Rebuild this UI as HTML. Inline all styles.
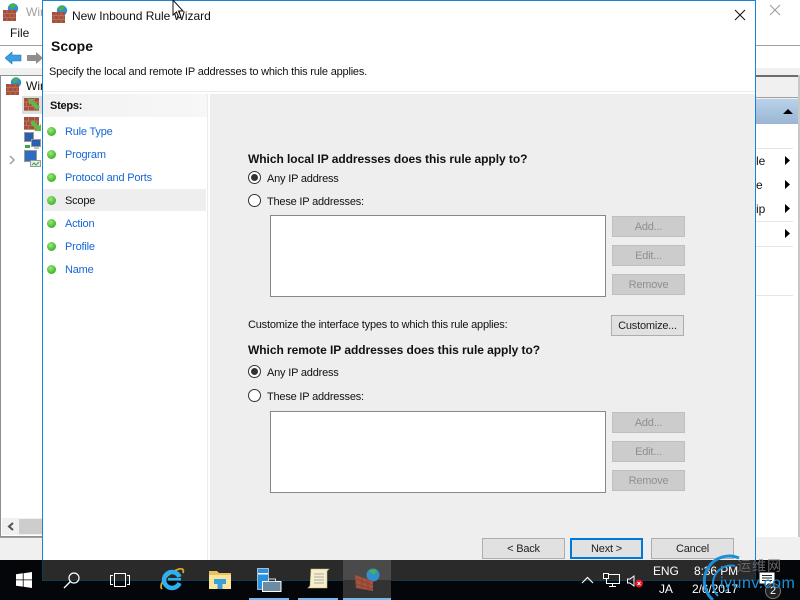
<!DOCTYPE html>
<html><head><meta charset="utf-8">
<style>
html,body{margin:0;padding:0;width:800px;height:600px;overflow:hidden;background:#f0f0f0}
body{position:relative;font-family:"Liberation Sans",sans-serif;font-size:11px;color:#111}
.a{position:absolute;white-space:nowrap;line-height:14px;font-size:11px;letter-spacing:-.2px}
.h{font-weight:bold;font-size:12px;letter-spacing:-.05px}
.b{position:absolute;box-sizing:border-box}
.btn{position:absolute;box-sizing:border-box;background:#e1e1e1;border:1px solid #adadad;text-align:center;line-height:21px;font-size:11px;letter-spacing:-.2px;color:#222}
.dis{background:#ccc;border-color:#bfbfbf;color:#8f8f8f}
.link{color:#1566d6;left:65px}
.dot{position:absolute;left:47px;width:9px;height:9px;border-radius:50%;background:radial-gradient(circle at 40% 35%,#9be87c,#3eb52b 70%)}
.radio{position:absolute;left:248px;box-sizing:border-box;width:13px;height:13px;border-radius:50%;border:1px solid #333;background:#fff}
.radio i{position:absolute;left:2px;top:2px;width:7px;height:7px;border-radius:50%;background:#333}
.list{position:absolute;left:270px;width:336px;box-sizing:border-box;background:#fff;border:1px solid #828790}
.tab{position:absolute;top:598px;height:2px;background:#76b9ed}
</style></head><body>
<svg width="0" height="0" style="position:absolute"><defs>
<g id="wall"><rect x="0" y="0" width="13" height="11" fill="#a5503c"/><path d="M0 3.500h13M0 7.500h13M4 0v3.500M9 0v3.500M2 3.500v4M7 3.500v4M11 3.500v4M4 7.500v3.500M9 7.500v3.500" stroke="#c58a78" stroke-width=".5" fill="none"/></g>
<g id="fw"><circle cx="10" cy="5.500" r="5.200" fill="#2f8fd0"/><path d="M6.500 2a5 4 0 0 1 7 0l-3 3-2.500 1z" fill="#49b14a"/><use href="#wall" x="0" y="7"/></g>
</defs></svg>

<!-- Background window -->
<div class="b" style="left:0;top:0;width:800px;height:46px;background:#fff;border-bottom:1px solid #a0a0a0"></div>
<svg class="b" style="left:3px;top:3px" width="16" height="19"><use href="#fw"/></svg>
<div class="a" style="left:26px;top:5px;color:#a0a0a0;font-size:12px;letter-spacing:0">Win</div>
<div class="a" style="left:10px;top:26px;font-size:12px;letter-spacing:0">File</div>
<div class="b" style="left:0;top:46px;width:800px;height:22px;background:#fff"></div>
<svg class="b" style="left:5px;top:50px" width="38" height="16"><path d="M0 8l7-6v3h9v6H7v3z" fill="#3c9de0" stroke="#1d78c0" stroke-width=".6"/><path d="M38 8l-7-6v3h-9v6h9v3z" fill="#8e8e8e"/></svg>
<div class="b" style="left:0;top:68px;width:800px;height:8px;background:#f0f0f0"></div>
<div class="b" style="left:0;top:75px;width:42px;height:462px;background:#fff;border:1px solid #8a8f96;border-right:0"></div>
<div class="a" style="left:26px;top:79px;font-size:12px;letter-spacing:0">Win</div>
<svg class="b" style="left:6px;top:77px" width="16" height="19"><use href="#fw"/></svg>
<div class="b" style="left:22px;top:96px;width:20px;height:18px;background:#dedede"></div>
<svg class="b" style="left:24px;top:98px" width="18" height="14"><use href="#wall" transform="scale(1.150)"/><path d="M5 1h6l-2 1.500 7 6.500-3 3-6.500-6.500L5 7z" fill="#62b948"/></svg>
<svg class="b" style="left:24px;top:117px" width="18" height="15"><use href="#wall" transform="scale(1.150)"/><path d="M17 14h-7l2-2-6-6 3-3 6 6 2-2z" fill="#62b948"/></svg>
<svg class="b" style="left:24px;top:132px" width="18" height="18"><rect x=".5" y=".5" width="9" height="9" fill="#2a5fb0" stroke="#999"/><rect x="7.500" y="7.500" width="9" height="7" fill="#2a5fb0" stroke="#999"/><path d="M1 13h5v3H1z" fill="#3aa83a"/><path d="M10 16h5" stroke="#888"/></svg>
<svg class="b" style="left:24px;top:150px" width="18" height="18"><rect x=".5" y=".5" width="12" height="11" fill="#2f6cc0" stroke="#999"/><rect x="6.500" y="10.500" width="10" height="6" fill="#e4efe4" stroke="#999"/><path d="M8 15l2-2 2 2 3-3" stroke="#3aa83a" fill="none"/></svg>
<svg class="b" style="left:9px;top:155px" width="8" height="10"><path d="M1 1l4 4-4 4" fill="none" stroke="#a0a0a0" stroke-width="1.500"/></svg>
<div class="b" style="left:2px;top:518px;width:40px;height:17px;background:#f0f0f0"></div>
<div class="b" style="left:19px;top:519px;width:23px;height:15px;background:#cdcdcd"></div>
<svg class="b" style="left:7px;top:522px" width="7" height="9"><path d="M6 1L2 4.500l4 3.500" fill="none" stroke="#505050" stroke-width="2"/></svg>
<div class="b" style="left:0;top:537px;width:42px;height:1px;background:#a0a0a0"></div>

<!-- Right side of background window -->
<svg class="b" style="left:769px;top:4px" width="12" height="12"><path d="M1 1l10 10M11 1L1 11" stroke="#999" stroke-width="1"/></svg>
<div class="b" style="left:756px;top:75px;width:44px;height:2px;background:#6d6d6d"></div>
<div class="b" style="left:756px;top:77px;width:42px;height:21px;background:#f0f0f0;border-bottom:1px solid #a0a0a0"></div>
<div class="b" style="left:756px;top:99px;width:42px;height:25px;background:linear-gradient(#b9d2ea,#9ab6d3)"></div>
<div class="b" style="left:756px;top:124px;width:42px;height:413px;background:#fff"></div>
<div class="b" style="left:798px;top:75px;width:2px;height:462px;background:#c8c8c8"></div>
<div class="b" style="left:756px;top:148px;width:37px;height:1px;background:#e5e5e5"></div>
<div class="b" style="left:756px;top:221px;width:37px;height:1px;background:#e5e5e5"></div>
<div class="b" style="left:756px;top:246px;width:37px;height:1px;background:#e5e5e5"></div>
<div class="b" style="left:756px;top:295px;width:37px;height:1px;background:#e5e5e5"></div>
<div class="a" style="left:756px;top:154px;font-size:12px;letter-spacing:0">le</div>
<div class="a" style="left:756px;top:178px;font-size:12px;letter-spacing:0">e</div>
<div class="a" style="left:756px;top:202px;font-size:12px;letter-spacing:0">ip</div>
<svg class="b" style="left:781px;top:105px" width="14" height="12"><path d="M2 9l5-5 5 5z" fill="#000"/></svg>
<svg class="b" style="left:785px;top:155px" width="7" height="90"><path d="M0 1l5 4.500L0 10zM0 25l5 4.500L0 34zM0 49l5 4.500L0 58zM0 74l5 4.500L0 83z" fill="#000"/></svg>

<!-- Dialog -->
<div class="b" style="left:42px;top:0;width:714px;height:560px;background:#fff;border:1px solid #1883d7;border-bottom:0"></div>
<svg class="b" style="left:52px;top:5px" width="16" height="19"><use href="#fw"/></svg>
<div class="a" style="left:72px;top:9px;font-size:12px;letter-spacing:-.03px">New Inbound Rule Wizard</div>
<svg class="b" style="left:734px;top:9px" width="12" height="12"><path d="M1 1l10 10M11 1L1 11" stroke="#111" stroke-width="1"/></svg>
<div class="a" style="left:51px;top:38px;font-size:14px;font-weight:bold;line-height:16px;letter-spacing:0">Scope</div>
<div class="a" style="left:49px;top:65px">Specify the local and remote IP addresses to which this rule applies.</div>
<div class="b" style="left:43px;top:91px;width:712px;height:1px;background:#ececec"></div>

<!-- Steps -->
<div class="b" style="left:43px;top:94px;width:165px;height:23px;background:linear-gradient(90deg,#f2f2f2,#f7f7f7)"></div>
<div class="a" style="left:50px;top:99px;font-weight:bold;letter-spacing:-.25px">Steps:</div>
<div class="b" style="left:207px;top:94px;width:1px;height:466px;background:#ececec"></div>
<div class="b" style="left:210px;top:94px;width:545px;height:466px;background:#eeeeee"></div>
<div class="b" style="left:43px;top:189px;width:163px;height:22px;background:#eeeeee"></div>
<div class="dot" style="top:127px"></div><div class="a link" style="top:125px">Rule Type</div>
<div class="dot" style="top:150px"></div><div class="a link" style="top:148px">Program</div>
<div class="dot" style="top:173px"></div><div class="a link" style="top:171px">Protocol and Ports</div>
<div class="dot" style="top:196px"></div><div class="a" style="left:65px;top:194px">Scope</div>
<div class="dot" style="top:219px"></div><div class="a link" style="top:217px">Action</div>
<div class="dot" style="top:242px"></div><div class="a link" style="top:240px">Profile</div>
<div class="dot" style="top:265px"></div><div class="a link" style="top:263px">Name</div>

<!-- Local -->
<div class="a h" style="left:248px;top:152px">Which local IP addresses does this rule apply to?</div>
<div class="radio" style="top:171px"><i></i></div>
<div class="a" style="left:267px;top:172px">Any IP address</div>
<div class="radio" style="top:194px"></div>
<div class="a" style="left:267px;top:195px">These IP addresses:</div>
<div class="list" style="top:215px;height:82px"></div>
<div class="btn dis" style="left:612px;top:216px;width:73px;height:21px">Add...</div>
<div class="btn dis" style="left:612px;top:245px;width:73px;height:21px">Edit...</div>
<div class="btn dis" style="left:612px;top:274px;width:73px;height:21px">Remove</div>

<div class="a" style="left:248px;top:318px">Customize the interface types to which this rule applies:</div>
<div class="btn" style="left:611px;top:315px;width:73px;height:21px">Customize...</div>

<!-- Remote -->
<div class="a h" style="left:248px;top:343px">Which remote IP addresses does this rule apply to?</div>
<div class="radio" style="top:365px"><i></i></div>
<div class="a" style="left:267px;top:366px">Any IP address</div>
<div class="radio" style="top:389px"></div>
<div class="a" style="left:267px;top:390px">These IP addresses:</div>
<div class="list" style="top:411px;height:82px"></div>
<div class="btn dis" style="left:612px;top:412px;width:73px;height:21px">Add...</div>
<div class="btn dis" style="left:612px;top:441px;width:73px;height:21px">Edit...</div>
<div class="btn dis" style="left:612px;top:470px;width:73px;height:21px">Remove</div>

<div class="btn" style="left:482px;top:538px;width:83px;height:21px">&lt; Back</div>
<div class="btn" style="left:570px;top:538px;width:73px;height:21px;border:2px solid #0078d7;line-height:19px">Next &gt;</div>
<div class="btn" style="left:651px;top:538px;width:83px;height:21px">Cancel</div>

<!-- Taskbar -->
<div class="b" style="left:0;top:560px;width:800px;height:40px;background:#05060a"></div>
<div class="b" style="left:42px;top:560px;width:714px;height:21px;background:#2a2a2a;border:1px solid #123a55;border-top:0"></div>
<div class="b" style="left:343px;top:560px;width:48px;height:40px;background:linear-gradient(#4a4a4a 0,#4a4a4a 50%,#333 50%,#333 100%)"></div>
<div class="tab" style="left:249px;width:40px"></div>
<div class="tab" style="left:298px;width:40px"></div>
<div class="tab" style="left:343px;width:48px"></div>
<svg class="b" style="left:16px;top:572px" width="16" height="16"><path d="M0 2.300l6.800-1v6.200H0zM7.600 1.200L16 0v7.500H7.600zM0 8.300h6.800v6.300L0 13.700zM7.600 8.300H16V16l-8.400-1.200z" fill="#fff"/></svg>
<svg class="b" style="left:63px;top:571px" width="18" height="18"><circle cx="11" cy="7" r="5" fill="none" stroke="#fff" stroke-width="1.200"/><path d="M7.500 10.500L1 17" stroke="#fff" stroke-width="1.300"/></svg>
<svg class="b" style="left:110px;top:572px" width="20" height="16"><rect x="4.500" y="1.500" width="11" height="13" fill="none" stroke="#fff"/><path d="M3 3.500H.5v9H3M17 3.500h2.500v9H17" fill="none" stroke="#fff"/></svg>
<svg class="b" style="left:159px;top:567px" width="26" height="24"><path d="M3 22C-1 18 8 6 20 2c4-1 5 1 4 4" fill="none" stroke="#d9a520" stroke-width="1.800"/><path d="M20.500 16a8 8 0 1 1 0-6" fill="none" stroke="#2fb0ee" stroke-width="4.500"/><rect x="9" y="11" width="13" height="2.500" fill="#2fb0ee"/></svg>
<svg class="b" style="left:209px;top:571px" width="22" height="18"><path d="M0 0h8l2 2h12v16H0z" fill="#e8c25e"/><path d="M0 4h22v14H0z" fill="#fbe59b"/><path d="M5 8h12v5h-3.500v5h-5v-5H5z" fill="#39a0e0"/></svg>
<svg class="b" style="left:257px;top:568px" width="25" height="24"><rect x=".5" y=".5" width="11" height="21" fill="#2a90e0" stroke="#fff" stroke-width=".6"/><rect x="1" y="5" width="10" height="1.500" fill="#fff"/><rect x="5.500" y="13.500" width="18.500" height="10" fill="#6d8ba3" stroke="#fff"/><rect x="11.500" y="11" width="7" height="2.500" fill="none" stroke="#ddd"/></svg>
<svg class="b" style="left:307px;top:568px" width="23" height="23"><path d="M4 1h18l-2 2v17H1l2-2z" fill="#f7eecb" stroke="#c9b97a" stroke-width=".6"/><path d="M7 6h10M7 9h10M7 12h10M7 15h10" stroke="#aaa"/></svg>
<svg class="b" style="left:355px;top:568px" width="25" height="24"><circle cx="18" cy="7" r="6.500" fill="#2f8fcf"/><path d="M14 3a6 4 0 0 1 8-1l-3 5z" fill="#4cb04c"/><path d="M0 7l18 6v10L1 20z" fill="#a3523f"/><path d="M.5 11l17.500 6M1 16l17 5M7 9v13M13 11v11" stroke="#7d3b2d" stroke-width=".6" fill="none"/></svg>

<!-- Tray -->
<svg class="b" style="left:581px;top:576px" width="13" height="8"><path d="M1 7l5.500-5.500L12 7" fill="none" stroke="#fff" stroke-width="1.200"/></svg>
<svg class="b" style="left:603px;top:573px" width="17" height="15"><path d="M3.500 1.500h13v9h-13zM9.500 10.500v3M6 13.500h7" fill="none" stroke="#fff"/><rect x=".5" y=".5" width="5" height="5" fill="#222" stroke="#fff"/></svg>
<svg class="b" style="left:627px;top:574px" width="17" height="14"><path d="M.5 5h2.500l4-3v10l-4-3H.5z" fill="none" stroke="#fff"/><circle cx="12" cy="9.500" r="4" fill="#e81123"/><path d="M10.500 8l3 3M13.500 8l-3 3" stroke="#fff"/></svg>
<div class="a" style="left:653px;top:564px;color:#fff;font-size:12px;letter-spacing:-.1px">ENG</div>
<div class="a" style="left:659px;top:582px;color:#fff;font-size:12px;letter-spacing:-.1px">JA</div>
<div class="a" style="left:694px;top:564px;color:#fff;font-size:12px;letter-spacing:-.1px">8:36 PM</div>
<div class="a" style="left:692px;top:582px;color:#fff;font-size:12px;letter-spacing:-.1px">2/6/2017</div>
<svg class="b" style="left:759px;top:572px" width="17" height="15"><path d="M.5.500h15v11H9l-3 3v-3H.5z" fill="#fff"/><path d="M3 3.500h10M3 6h10M3 8.500h10" stroke="#222"/></svg>
<div class="b" style="left:765px;top:583px;width:16px;height:16px;border-radius:50%;background:#222;border:1px solid #777"></div>
<div class="a" style="left:770px;top:584px;color:#fff;font-size:11px;letter-spacing:0">2</div>

<!-- Watermark -->
<svg class="b" style="left:695px;top:550px" width="50" height="50"><path d="M44 8A25 25 0 0 0 18 50" fill="none" stroke="#1a8fd8" stroke-width="3"/><path d="M40 16A18 18 0 0 0 23 46" fill="none" stroke="#1a8fd8" stroke-width="2"/></svg>
<div class="a" style="left:737px;top:559px;color:#666;font-size:14px;font-family:'Liberation Sans','Noto Sans CJK SC',sans-serif;letter-spacing:1px">运维网</div>
<div class="a" style="left:720px;top:577px;color:#1a8fd8;font-size:16px;letter-spacing:.5px">iyunv.com</div>

<!-- Cursor -->
<svg class="b" style="left:172px;top:0" width="14" height="20"><path d="M1 0v15l3.500-3 2.500 6 2-1-2.500-6H11z" fill="#fff" stroke="#111"/></svg>
</body></html>
